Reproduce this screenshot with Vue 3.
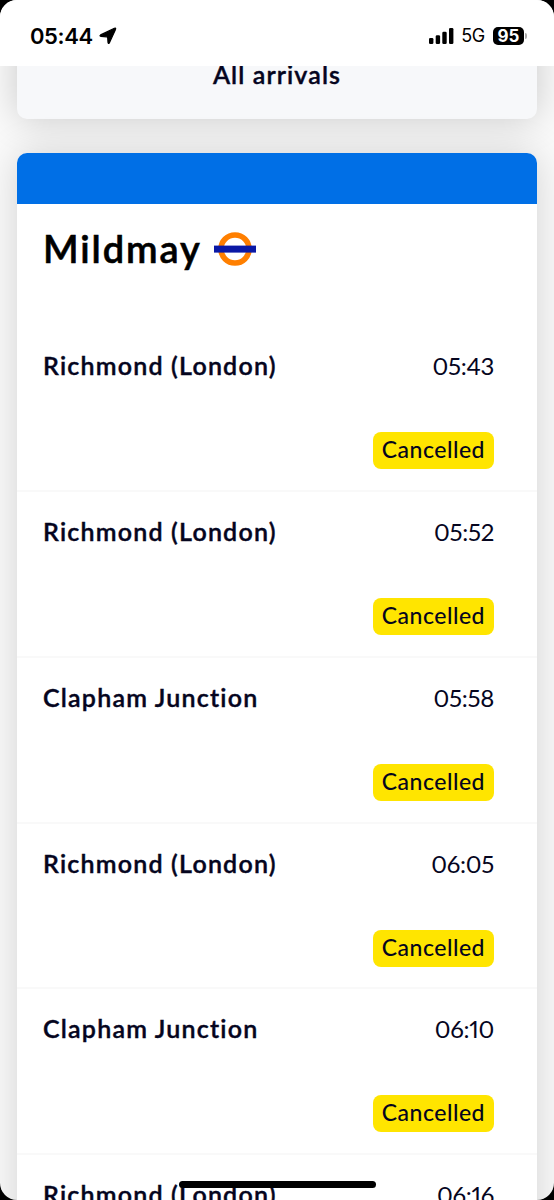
<template>
  <div class="screen">
    <header class="status-bar">
      <div class="clock">
        <span class="clock-time">05:44</span>
        <svg class="location" viewBox="0 0 18 18" width="18" height="18">
          <path d="M1.6 7.9 L15.4 1.3 Q17.2 .6 16.5 2.4 L10.3 15.9 Q9.3 17.3 9 15.5 L8.7 10.6 Q8.6 9.8 7.8 9.8 L2 9.3 Q.2 8.9 1.6 7.9 Z" />
        </svg>
      </div>
      <div class="indicators">
        <svg class="signal" viewBox="0 0 25 16" width="25" height="16">
          <rect x="0" y="10" width="4.4" height="6" rx="1.3" />
          <rect x="6.7" y="7.2" width="4.4" height="8.8" rx="1.3" />
          <rect x="13.3" y="3.8" width="4.4" height="12.2" rx="1.3" />
          <rect x="20" y="0" width="4.4" height="16" rx="1.3" />
        </svg>
        <span class="network">5G</span>
        <div class="battery">95</div>
        <div class="battery-cap"></div>
      </div>
    </header>

    <main class="content">
      <section class="tab-card">
        <span>All arrivals</span>
      </section>

      <section class="line-card">
        <div class="line-banner"></div>
        <div class="line-header">
          <h1>Mildmay</h1>
          <svg class="roundel" viewBox="0 0 42 34" width="42" height="34">
            <circle cx="21" cy="17" r="14" fill="none" stroke="#ff7f00" stroke-width="5.6" />
            <rect x="0" y="13.6" width="42" height="7" fill="#0a18a5" />
          </svg>
        </div>
        <ul class="arrivals">
          <li v-for="arrival in arrivals" :key="arrival.time" class="arrival">
            <div class="arrival-row">
              <span class="destination">{{ arrival.destination }}</span>
              <span class="time">{{ arrival.time }}</span>
            </div>
            <span class="badge">{{ arrival.status }}</span>
          </li>
        </ul>
      </section>
    </main>

    <div class="home-indicator"></div>
  </div>
</template>

<script setup>
import { ref } from 'vue';

const arrivals = ref([
  { destination: 'Richmond (London)', time: '05:43', status: 'Cancelled' },
  { destination: 'Richmond (London)', time: '05:52', status: 'Cancelled' },
  { destination: 'Clapham Junction', time: '05:58', status: 'Cancelled' },
  { destination: 'Richmond (London)', time: '06:05', status: 'Cancelled' },
  { destination: 'Clapham Junction', time: '06:10', status: 'Cancelled' },
  { destination: 'Richmond (London)', time: '06:16', status: 'Cancelled' }
]);
</script>

<style>
body {
  margin: 0;
  background: #000;
}
</style>

<style scoped>
.screen {
  position: relative;
  display: flex;
  flex-direction: column;
  height: 1200px;
  overflow: hidden;
  border-radius: 17px;
  background: #fafafa;
  color: #05051e;
  font-family: Lato, "Liberation Sans", sans-serif;
  font-variant-ligatures: none;
}

/* status bar */
.status-bar {
  flex: none;
  display: flex;
  justify-content: space-between;
  box-sizing: border-box;
  height: 66px;
  padding: 26px 27px 0 30px;
  background: #fff;
  color: #000;
  font-family: Inter, sans-serif;
  z-index: 1;
}

.clock,
.indicators {
  display: flex;
  align-items: center;
  height: 19px;
}

.clock-time {
  font-size: 22px;
  font-weight: 600;
  letter-spacing: -0.4px;
}

.location {
  margin-left: 6px;
  stroke: #000;
  stroke-width: 1.2;
  stroke-linejoin: round;
}

.network {
  margin-left: 7px;
  font-size: 18px;
  letter-spacing: -0.3px;
}

.battery {
  box-sizing: border-box;
  width: 31px;
  height: 18px;
  margin-left: 8px;
  border-radius: 5px;
  background: #000;
  color: #fff;
  font-size: 17px;
  font-weight: 700;
  line-height: 18px;
  text-align: center;
}

.battery-cap {
  width: 2px;
  height: 6px;
  margin-left: 1px;
  border-radius: 0 2px 2px 0;
  background: #aaa;
}

/* cards */
.content {
  flex: 1;
  min-height: 0;
  padding: 0 17px;
}

.tab-card {
  box-sizing: border-box;
  height: 133px;
  margin: -80px 0 34px;
  padding-top: 78px;
  border-radius: 10px;
  background: #f7f8fa;
  box-shadow: 0 0 38px rgba(0, 0, 0, 0.2);
  font-size: 25px;
  font-weight: 600;
  line-height: 20px;
  letter-spacing: 1.1px;
  text-align: center;
  -webkit-text-stroke: 0.4px #05051e;
}

.line-card {
  height: 1100px;
  border-radius: 10px;
  background: #fff;
  box-shadow: 0 0 38px rgba(0, 0, 0, 0.16);
}

.line-banner {
  height: 51px;
  border-radius: 10px 10px 0 0;
  background: #006fe6;
}

.line-header {
  display: flex;
  align-items: center;
  height: 122px;
  box-sizing: border-box;
  padding: 0 26px 32px;
}

h1 {
  margin: -3px 0 0;
  color: #000;
  font-size: 38px;
  font-weight: 600;
  letter-spacing: 1.9px;
  -webkit-text-stroke: 0.6px #000;
}

.roundel {
  margin-left: 12px;
}

.arrivals {
  margin: 0;
  padding: 0;
  list-style: none;
}

.arrival {
  display: flex;
  flex-direction: column;
  align-items: flex-end;
  box-sizing: border-box;
  height: 165.85px;
  padding: 24px 43px 0 26px;
  border-bottom: 2px solid #f9f9f9;
}

.arrival-row {
  display: flex;
  align-self: stretch;
  justify-content: space-between;
  font-size: 25px;
  line-height: 32px;
}

.destination {
  font-weight: 600;
  line-height: 30px;
  letter-spacing: 1.2px;
  -webkit-text-stroke: 0.4px #05051e;
}

.time {
  font-size: 24px;
  font-variant-numeric: proportional-nums;
  letter-spacing: -0.3px;
}

.badge {
  box-sizing: border-box;
  height: 37px;
  margin-top: 50px;
  padding: 0 9px;
  border-radius: 8px;
  background: #ffe500;
  color: #05051e;
  font-size: 23px;
  font-weight: 500;
  line-height: 34px;
  letter-spacing: 0.5px;
}

.home-indicator {
  position: absolute;
  bottom: 12px;
  left: 179px;
  width: 197px;
  height: 7px;
  border-radius: 4px;
  background: #000;
}
</style>
